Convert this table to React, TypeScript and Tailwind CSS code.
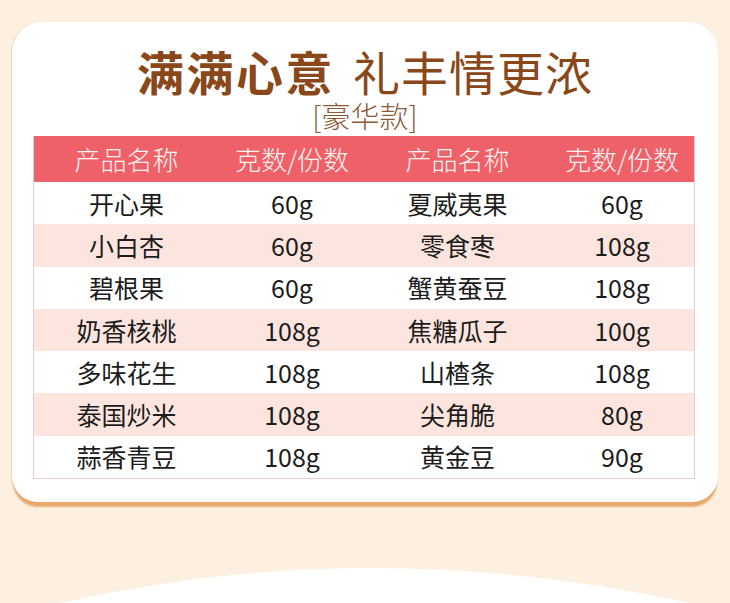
const rows: [string, string, string, string][] = [
  ['开心果', '60g', '夏威夷果', '60g'],
  ['小白杏', '60g', '零食枣', '108g'],
  ['碧根果', '60g', '蟹黄蚕豆', '108g'],
  ['奶香核桃', '108g', '焦糖瓜子', '100g'],
  ['多味花生', '108g', '山楂条', '108g'],
  ['泰国炒米', '108g', '尖角脆', '80g'],
  ['蒜香青豆', '108g', '黄金豆', '90g'],
];

const font = { fontFamily: '"Noto Sans CJK SC", "Noto Sans", sans-serif' };

export default function App() {
  return (
    <div
      className="w-[730px] h-[603px] bg-[#fdf0e1] overflow-hidden flex flex-col"
      style={font}
    >
      <div className="ml-[12px] mt-[22px] w-[706px] h-[480px] bg-white rounded-t-[30px] rounded-b-[26px] shadow-[0_6px_2px_-1px_#e6a86c,-1px_0_0_#eadbc6] flex flex-col">
        <h1 className="mt-[25px] flex justify-center text-[47px] leading-[47px] text-[#8a4719]">
          <span className="font-bold tracking-[2.5px]">满满心意</span>
          <span className="ml-[18px] font-normal tracking-[1px]">礼丰情更浓</span>
        </h1>
        <p className="mt-[7px] text-center text-[29px] leading-[28px] text-[#8a5a36] font-light">
          [豪华款]
        </p>

        <div className="mt-[7px] ml-[21px] w-[662px] border-x border-b border-[#e6cfcf] overflow-hidden">
          <div className="grid grid-cols-[175px_166px_165px_1fr] h-[46px] items-center bg-[#ef6169] text-[26px] leading-none text-[#fff4f0] font-light">
            <div className="pl-[10px] text-center">产品名称</div>
            <div className="text-center">克数/份数</div>
            <div className="text-center">产品名称</div>
            <div className="pl-[10px] text-center">克数/份数</div>
          </div>
          {rows.map((r, i) => (
            <div
              key={r[0]}
              className={`grid grid-cols-[175px_166px_165px_1fr] h-[42.3px] items-center text-[25px] leading-none text-[#1c1c1c] ${
                i % 2 === 1 ? 'bg-[#fce5df]' : 'bg-white'
              }`}
            >
              <div className="pl-[10px] text-center">{r[0]}</div>
              <div className="text-center">{r[1]}</div>
              <div className="text-center">{r[2]}</div>
              <div className="pl-[10px] text-center">{r[3]}</div>
            </div>
          ))}
        </div>
      </div>

      <svg className="mt-auto block" width="730" height="40" viewBox="0 0 730 40">
        <path d="M60 40 Q 370 -30 690 40 Z" fill="#ffffff" opacity="0.95" />
      </svg>
    </div>
  );
}
